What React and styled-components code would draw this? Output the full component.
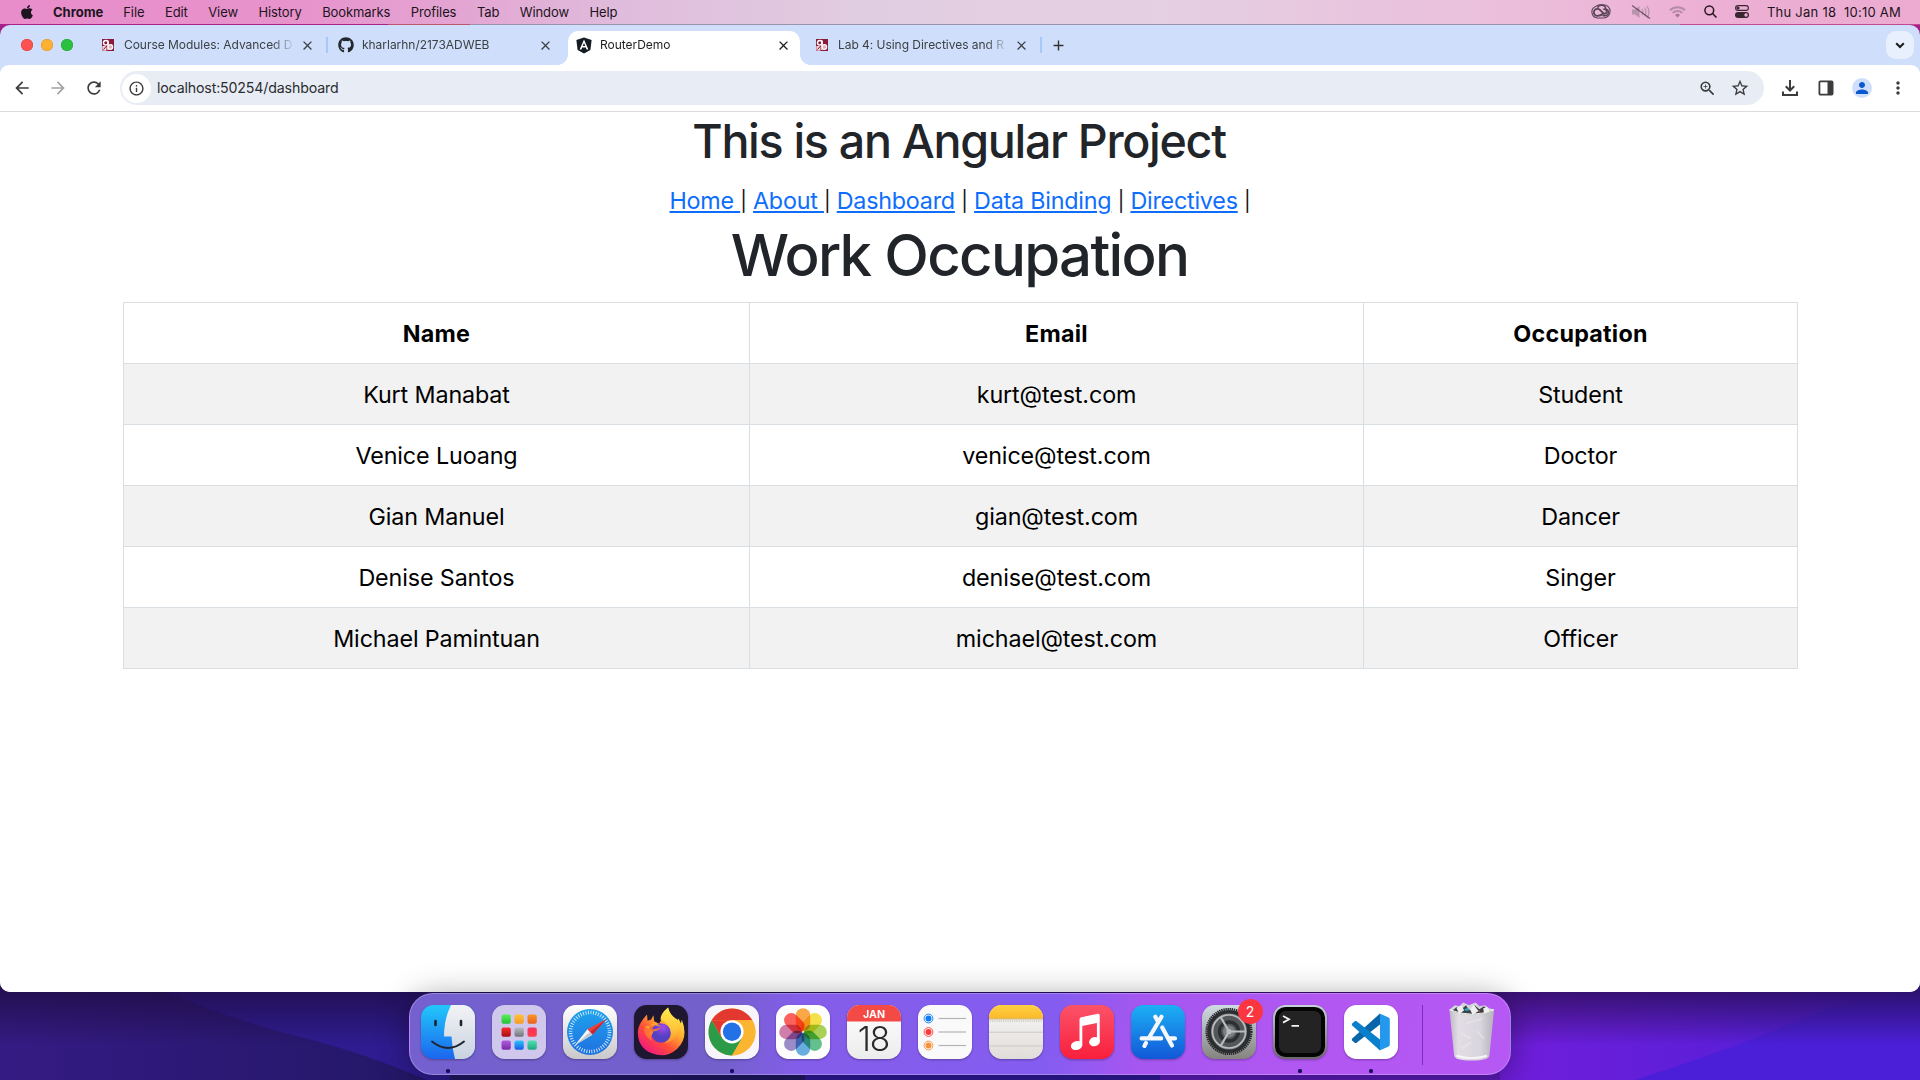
import React from "react";
import styled, { createGlobalStyle, css } from "styled-components";
import { FaApple, FaGithub } from "react-icons/fa";
import {
  MdArrowBack,
  MdArrowForward,
  MdRefresh,
  MdInfoOutline,
  MdZoomIn,
  MdStarBorder,
  MdMoreVert,
  MdPerson,
  MdClose,
  MdAdd,
} from "react-icons/md";

const GlobalStyle = createGlobalStyle`
  *, *::before, *::after { box-sizing: border-box; }
  body { margin: 0; font-family: Inter, Roboto, sans-serif; overflow: hidden; }
`;

const Desktop = styled.div`
  position: relative;
  display: flex;
  flex-direction: column;
  width: 1920px;
  height: 1080px;
  overflow: hidden;
  background: #a3208b;
`;

const Wallpaper = styled.svg`
  position: absolute;
  inset: 0;
`;

const MenuBar = styled.header`
  position: relative;
  display: flex;
  align-items: center;
  justify-content: space-between;
  height: 25px;
  padding: 0 19px 2px 19px;
  font-size: 13px;
  color: #1d1420;
  background:
    linear-gradient(90deg, #a8238a 0 388px, #c0546e 388px 470px, #9a93ae 470px 1680px, #c34a8d 1680px) 0 100% / 100% 1px no-repeat,
    linear-gradient(90deg, #e88dca 0, #e793cc 300px, #e3a6d3 470px, #e0bcdc 620px, #e1cde1 860px, #e4cfe2 1150px, #ebbfdc 1500px, #edb0d5 1700px, #ecaad0 1920px);
`;

const Menus = styled.nav`
  display: flex;
  align-items: center;
  gap: 20.5px;
  letter-spacing: -0.1px;
`;

const Status = styled.div`
  display: flex;
  align-items: center;
  gap: 18px;
`;

const Clock = styled.span`
  white-space: pre;
  letter-spacing: 0.24px;
`;

const AppName = styled.span`
  margin: 0 -0.500px 0 -2.500px;
  font-weight: 700;
  letter-spacing: 0;
`;

const BrowserWindow = styled.main`
  position: relative;
  display: flex;
  flex-direction: column;
  height: 967px;
  overflow: hidden;
  border-radius: 10px;
  background: #cfdffb;
`;

const TabStrip = styled.div`
  display: flex;
  align-items: center;
  height: 40px;
  padding: 0 6px 0 21px;
`;

const Lights = styled.div`
  display: flex;
  gap: 8px;
  width: 69px;
`;

const Light = styled.span`
  width: 12px;
  height: 12px;
  border-radius: 50%;
  background: ${(p) => p.$color};
  box-shadow: inset 0 0 0 0.5px ${(p) => p.$edge};
`;

const TabSlot = styled.div`
  display: flex;
  align-items: flex-end;
  width: 238px;
  height: 40px;
  padding: 0 4px 0 2px;
  background: ${(p) => (p.$divider ? "linear-gradient(#a5c8f8, #a5c8f8) 100% 50% / 2px 16px no-repeat" : "none")};
`;

const TabBody = styled.div`
  position: relative;
  display: flex;
  align-items: center;
  width: 232px;
  height: 34px;
  padding: 0 9px 6px 8px;
  border-radius: 10px 10px 0 0;
  font-size: 12px;
  color: #3c4043;
  ${(p) =>
    p.$active &&
    css`
      color: #1f1f1f;
      background: #fff;
      &::before,
      &::after {
        content: "";
        position: absolute;
        bottom: 0;
        width: 10px;
        height: 10px;
      }
      &::before {
        left: -10px;
        background: radial-gradient(circle at 0 0, transparent 9.5px, #fff 10px);
      }
      &::after {
        right: -10px;
        background: radial-gradient(circle at 100% 0, transparent 9.5px, #fff 10px);
      }
    `}
`;

const TabIcon = styled.span`
  display: flex;
  justify-content: center;
  width: 16px;
  margin-right: 8px;
`;

const TabTitle = styled.span`
  width: 172px;
  margin-right: 5px;
  padding-bottom: 1px;
  white-space: nowrap;
  letter-spacing: -0.03px;
  mask-image: linear-gradient(90deg, #000 148px, transparent 171px);
`;

const TabClose = styled(MdClose)`
  flex: none;
  width: 15px;
  height: 15px;
`;

const NewTab = styled(MdAdd)`
  width: 17px;
  height: 17px;
  margin-left: 8px;
  color: #333;
`;

const TabSearch = styled.button`
  display: flex;
  align-items: center;
  justify-content: center;
  width: 28px;
  height: 28px;
  margin-left: auto;
  padding: 0;
  border: 0;
  border-radius: 10px;
  background: #e8f0fd;
`;

const Toolbar = styled.div`
  display: flex;
  align-items: center;
  height: 47px;
  padding: 0 4px 0 12px;
  border-bottom: 1px solid #dcdcdf;
  border-radius: 9px 9px 0 0;
  background: #fff;
  color: #3c3c3e;
`;

const NavButtons = styled.div`
  display: flex;
  gap: 16px;
  width: 108px;
`;

const Omnibox = styled.div`
  display: flex;
  align-items: center;
  width: 1644px;
  height: 34px;
  padding: 0 14px 0 2px;
  border-radius: 17px;
  background: #e8ecf5;
`;

const SiteInfo = styled.span`
  display: flex;
  align-items: center;
  justify-content: center;
  width: 29px;
  height: 29px;
  margin-right: 6px;
  border-radius: 50%;
  background: #fff;
`;

const Address = styled.span`
  padding-bottom: 1px;
  color: #2b2d30;
  font-size: 14.2px;
  letter-spacing: -0.16px;
`;

const OmniActions = styled.span`
  display: flex;
  align-items: center;
  gap: 13px;
  margin-left: auto;
`;

const ToolActions = styled.div`
  display: grid;
  grid-template-columns: repeat(4, 36px);
  place-items: center;
  margin-left: auto;
`;

const Avatar = styled.span`
  display: flex;
  align-items: center;
  justify-content: center;
  width: 20px;
  height: 20px;
  border-radius: 50%;
  background: #cfdffb;
  color: #0b57d0;
`;

const Page = styled.section`
  flex: 1;
  background: #fff;
  color: #212529;
  font-size: 23.3px;
  line-height: 36px;
  letter-spacing: -0.12px;
  text-align: center;
`;

const ProjectTitle = styled.h2`
  margin: 0;
  padding: 1px 2px 11px 0;
  font-size: 46.6px;
  line-height: 57.6px;
  font-weight: 550;
  letter-spacing: -1.31px;
`;

const Links = styled.nav`
  height: 36px;
  padding: 1px 0 0;
  white-space: pre;
  letter-spacing: -0.22px;
`;

const Link = styled.a`
  color: #0d6efd;
  text-decoration: underline 2px;
  text-underline-offset: 2px;
`;

const Separator = styled.span`
  font-size: 20px;
  vertical-align: 1px;
  line-height: 1;
  color: #111;
`;

const PageTitle = styled.h1`
  margin: 0;
  padding: 1px 1px 11px 0;
  font-size: 58.2px;
  line-height: 72px;
  font-weight: 550;
  letter-spacing: -1.7px;
`;

const Table = styled.table`
  width: 1674px;
  margin: 0 auto;
  border-collapse: collapse;
  table-layout: fixed;
  color: #000;
`;

const Cell = styled.td`
  height: 61px;
  padding: 2px 0 0 1px;
  border: 1px solid #d9dee3;
  background: ${(p) => (p.$striped ? "#f2f2f2" : "#fff")};
`;

const HeadCell = styled(Cell)`
  width: ${(p) => p.$width}px;
  font-weight: 700;
  letter-spacing: 0.25px;
`;

const Dock = styled.footer`
  position: relative;
  display: flex;
  align-items: flex-start;
  width: 1102px;
  height: 82px;
  margin: 1px 0 0 409px;
  padding: 10.5px 14px 0 10.5px;
  border-radius: 24px;
  border: 1px solid rgba(255, 255, 255, 0.25);
  background:
    linear-gradient(100deg, transparent 640px, #a457f0 720px, #b257f2 900px, #b658f4 1102px),
    linear-gradient(90deg, #7461cf 0, #7360cb 310px, #845dea 390px, #855cf2 720px);
  box-shadow: 0 4px 30px 2px rgba(0, 0, 0, 0.34);
`;

const DockItem = styled.div`
  position: relative;
  display: flex;
  flex-direction: column;
  align-items: center;
  width: 54px;
  margin-right: 17px;
`;

const Tile = styled.svg`
  display: block;
  width: 54px;
  height: 54px;
  overflow: visible;
  filter: drop-shadow(0 1px 1px rgba(0, 0, 0, 0.3));
`;

const Running = styled.span`
  width: 4px;
  height: 4px;
  margin-top: 10.5px;
  border-radius: 1.5px;
  background: #1c0a5e;
`;

const Badge = styled.span`
  position: absolute;
  top: -6px;
  right: -7px;
  width: 25px;
  height: 25px;
  border-radius: 50%;
  background: #fb3640;
  color: #fff;
  font-size: 14px;
  line-height: 25px;
  text-align: center;
`;

const Divider = styled.span`
  width: 1px;
  height: 60px;
  margin: 0 26px 0 7px;
  background: #8029bd;
`;

const Trash = styled.svg`
  width: 50px;
  height: 62px;
  margin-top: -4px;
`;

const TileText = styled.text`
  font-family: Inter, sans-serif;
  text-anchor: middle;
`;

const CourseIcon = () => (
  <svg width="12" height="12" viewBox="0 0 12 12">
    <rect width="12" height="12" fill="#8a1a3a" />
    <rect x="0.300" y="7" width="4.200" height="4.700" fill="#f0d3da" />
    <circle cx="3.800" cy="3.800" r="2.300" fill="none" stroke="#fff" strokeWidth="1.500" />
    <path d="M1.500 10.500L5 6.500" stroke="#8a1a3a" strokeWidth="1" />
    <path d="M6 1.500v9.500" stroke="#fff" strokeWidth="1.400" />
    <circle cx="8.400" cy="8" r="2.300" fill="#e3aebb" stroke="#fff" strokeWidth="1.200" />
  </svg>
);

const AngularIcon = () => (
  <svg width="16" height="17" viewBox="0 0 16 17">
    <path d="M8 .4L15.6 3l-1.2 10L8 16.6 1.6 13 .4 3z" fill="#151b22" />
    <path d="M8 2.6L3.600 12.600h1.800l.8-2.100h3.600l.8 2.100h1.800zM8 6l1.200 3H6.800z" fill="#fff" fillRule="evenodd" />
  </svg>
);

const TABS = [
  { title: "Course Modules: Advanced D", icon: <CourseIcon />, divider: true },
  { title: "kharlarhn/2173ADWEB", icon: <FaGithub size={16} color="#24292f" /> },
  { title: "RouterDemo", icon: <AngularIcon />, active: true },
  { title: "Lab 4: Using Directives and R", icon: <CourseIcon />, divider: true },
];

const MENUS = ["File", "Edit", "View", "History", "Bookmarks", "Profiles", "Tab", "Window", "Help"];

const ROWS = [
  ["Kurt Manabat", "kurt@test.com", "Student"],
  ["Venice Luoang", "venice@test.com", "Doctor"],
  ["Gian Manuel", "gian@test.com", "Dancer"],
  ["Denise Santos", "denise@test.com", "Singer"],
  ["Michael Pamintuan", "michael@test.com", "Officer"],
];

const StatusIcons = () => (
  <>
    <svg width="22" height="15" viewBox="0 0 22 15" fill="none" stroke="#5a4556">
      <path d="M6.500 14A6 6 0 0 1 4.800 2.400 7 7 0 0 1 9 .8h3.500a6.600 6.600 0 0 1 0 13.200z" strokeWidth="1.100" />
      <path d="M12 9.800C9.500 12 7.500 11.800 6.200 11.800a3.500 3.500 0 1 1 2.600-6c1.200 1 2.200 2.200 3.200 3.200a2.200 2.200 0 1 0 .3-3.400" strokeWidth="1.800" />
      <path d="M6.500 3.800A4.400 4.400 0 0 1 14.900 5.300 3.300 3.300 0 0 1 14 11.800h-2.500" strokeWidth="1.500" />
    </svg>
    <svg width="20" height="16" viewBox="0 0 20 16">
      <path d="M1 5.500h3L8.500 2v12L4 10.500H1z" fill="#b793ac" />
      <path d="M11 5q2 3 0 6M13.500 3.500q3 4.500 0 9M16 2q4 6 0 12" fill="none" stroke="#b793ac" strokeWidth="1.300" />
      <path d="M1 1.500l18 13" stroke="#6b4f64" strokeWidth="1.100" />
    </svg>
    <svg width="17" height="12" viewBox="0 0 17 12" fill="none" stroke="#b58ba6" strokeWidth="1.900">
      <path d="M1 4.200a11 11 0 0 1 15 0M3.600 6.900a7.200 7.200 0 0 1 9.800 0" />
      <path d="M8.500 11.600L6 9a3.700 3.700 0 0 1 5 0z" fill="#a37796" stroke="none" />
    </svg>
    <svg width="13" height="13" viewBox="0 0 13 13" fill="none" stroke="#26161f" strokeWidth="1.500">
      <circle cx="5.300" cy="5.300" r="4.400" />
      <path d="M8.600 8.600l3.800 3.900" />
    </svg>
    <svg width="14" height="13" viewBox="0 0 14 13">
      <rect x=".6" y=".6" width="12.800" height="4.800" rx="2.400" fill="none" stroke="#3a2631" strokeWidth="1.100" />
      <circle cx="3" cy="3" r="1.600" fill="#3a2631" />
      <rect y="7" width="14" height="6" rx="3" fill="#3a2631" />
      <circle cx="11" cy="10" r="1.700" fill="#ecb0d3" />
    </svg>
  </>
);

const FinderArt = () => (
  <>
    <defs>
      <linearGradient id="fb" x1="0" y1="0" x2="0" y2="1"><stop stopColor="#22c7fb" /><stop offset="1" stopColor="#1b66ee" /></linearGradient>
      <linearGradient id="fw" x1="0" y1="0" x2="0" y2="1"><stop stopColor="#f3f3f6" /><stop offset="1" stopColor="#c8d3e0" /></linearGradient>
      <clipPath id="tile"><rect width="54" height="54" rx="12.500" /></clipPath>
    </defs>
    <g clipPath="url(#tile)">
      <rect width="54" height="54" fill="url(#fb)" />
      <path d="M30 0Q23 14 23 31.500h7.500Q31 43 34 54h20V0z" fill="url(#fw)" />
    </g>
    <path d="M14.500 16v4M40 16v4" stroke="#1d2430" strokeWidth="2.600" strokeLinecap="round" />
    <path d="M11 36.500q16 13 32 0" fill="none" stroke="#20252d" strokeWidth="1.900" strokeLinecap="round" />
  </>
);

const PADS = [
  ["#5cf05a", "#22c136"], ["#ffc23c", "#f89a1c"], ["#fb9626", "#e8621c"],
  ["#fb2b2e", "#a50d12"], ["#b9bcc0", "#6f7276"], ["#fc2f5e", "#fb4049"],
  ["#b05be0", "#7a2aa8"], ["#2fc4fb", "#145be8"], ["#51dfb0", "#1fa882"],
];

const LaunchpadArt = () => (
  <>
    <rect width="54" height="54" rx="12.500" fill="#cfc8ec" />
    {PADS.map(([a, b], i) => (
      <g key={i}>
        <linearGradient id={`pad${i}`} x1="0" y1="0" x2="0" y2="1"><stop stopColor={a} /><stop offset="1" stopColor={b} /></linearGradient>
        <rect x={9.5 + (i % 3) * 13} y={9.5 + Math.floor(i / 3) * 13} width="9.300" height="9.300" rx="2" fill={`url(#pad${i})`} />
      </g>
    ))}
  </>
);

const SafariArt = () => (
  <>
    <linearGradient id="sfb" x1="0" y1="0" x2="0" y2="1"><stop stopColor="#fff" /><stop offset="1" stopColor="#c9c9cb" /></linearGradient>
    <linearGradient id="sfc" x1="0" y1="0" x2="0" y2="1"><stop stopColor="#1fa4ee" /><stop offset="1" stopColor="#1f6fe0" /></linearGradient>
    <rect width="54" height="54" rx="12.500" fill="url(#sfb)" />
    <circle cx="27" cy="27" r="23" fill="url(#sfc)" />
    <circle cx="27" cy="27" r="19.500" fill="none" stroke="#d9edfb" strokeWidth="3.600" strokeDasharray="0.900 1.652" />
    <path d="M43.500 14L24.400 24.300l5 5.400z" fill="#f0403c" />
    <path d="M43.500 14L27 27l2.400 2.700z" fill="#c82a2c" />
    <path d="M12 40l12.400-15.700 5 5.400z" fill="#f4f6f8" />
    <path d="M12 40L27 27l2.400 2.700z" fill="#c3c8ce" />
  </>
);

const FirefoxArt = () => (
  <>
    <defs>
      <linearGradient id="ff" x1="0.900" y1="0.100" x2="0.200" y2="1"><stop stopColor="#fff04f" /><stop offset=".35" stopColor="#ffab2d" /><stop offset=".65" stopColor="#ff4a3a" /><stop offset="1" stopColor="#f0128a" /></linearGradient>
      <linearGradient id="ffy" x1="0.500" y1="0" x2="0.500" y2="1"><stop stopColor="#ffee4c" /><stop offset=".6" stopColor="#ffc43a" /><stop offset="1" stopColor="#ff8a2e" /></linearGradient>
      <radialGradient id="ffg" cx=".6" cy=".2"><stop stopColor="#a34be8" /><stop offset="1" stopColor="#5540c4" /></radialGradient>
    </defs>
    <rect width="54" height="54" rx="12.500" fill="#1f1630" />
    <path d="M13 9.500l.6 6.300 3.600-1.200 2.200-4.400.8 6 5 2.600L34 2.500q2 7 7 11l1.500 4 2-4 2.500 5 .8-4Q55 33 43 44 34 52 23 49.800 4 46 3.800 27 4 19 13 9.500z" fill="url(#ff)" />
    <path d="M34 2.500q-7.500 6-7.500 12 8 2.500 9.500 11 1 8-6 13 11-2 14-11 2.200-8-.5-13Q35 10 34 2.500z" fill="url(#ffy)" />
    <circle cx="27" cy="28" r="9.800" fill="url(#ffg)" />
    <path d="M27 21.500l-6-1.200-10 .9q3 5 8.500 5.300-2 3-2.800 6Q12 22 20 17z" fill="#ffa02f" />
    <path d="M10 22q8 4 17 .5-3 4-8.500 4Q16 32 18 36 9 30 10 22z" fill="#ff7a35" opacity=".85" />
  </>
);

const ChromeArt = () => (
  <>
    <rect width="54" height="54" rx="12.500" fill="#f7f5fb" />
    <circle cx="27" cy="27" r="23.500" fill="#fbb531" />
    <path d="M6.650 15.250A23.500 23.500 0 0 1 47.350 15.250H27z" fill="#e2382f" />
    <path d="M6.650 15.250L16.800 32.900 27 27V15.250z" fill="#e2382f" />
    <path d="M6.650 15.250A23.500 23.500 0 0 0 27 50.500L37.200 32.900 27 27 16.800 32.900z" fill="#2c9b48" />
    <path d="M27 50.500A23.500 23.500 0 0 0 47.350 15.250H27L37.200 32.900z" fill="#fbb531" />
    <circle cx="27" cy="26.800" r="11.600" fill="#fff" />
    <circle cx="27" cy="26.800" r="9.200" fill="#2271e6" />
  </>
);

const PETALS = ["#fb9a2c", "#f5dd2a", "#9ccb3c", "#4bb87a", "#4fa3dc", "#8a7cc0", "#cc6aa2", "#fb4a44"];

const Petal = styled.rect`
  mix-blend-mode: multiply;
`;

const PhotosArt = () => (
  <>
    <rect width="54" height="54" rx="12.500" fill="#fdfdfd" />
    {PETALS.map((c, i) => (
      <Petal key={c} x="19.800" y="3.200" width="14.400" height="23" rx="7.200" fill={c} fillOpacity=".86" transform={`rotate(${i * 45} 27 27)`} />
    ))}
  </>
);

const CalendarArt = () => (
  <>
    <linearGradient id="cal" x1="0" y1="0" x2="0" y2="1"><stop stopColor="#fff" /><stop offset="1" stopColor="#ececec" /></linearGradient>
    <rect width="54" height="54" rx="12.500" fill="url(#cal)" />
    <path d="M0 16.500v-4A12.500 12.500 0 0 1 12.500 0h29A12.500 12.500 0 0 1 54 12.500v4z" fill="#f44a46" />
    <TileText x="27" y="13" fontSize="10.600" fontWeight="700" fill="#fff">JAN</TileText>
    <TileText x="26.500" y="45.500" fontSize="33.500" fontWeight="300" fill="#2a2a2a" letterSpacing="-1.200">18</TileText>
  </>
);

const RemindersArt = () => (
  <>
    <rect width="54" height="54" rx="12.500" fill="#fafafa" />
    {["#0f7bf5", "#fb3a3a", "#f5923a"].map((c, i) => (
      <g key={c} transform={`translate(0 ${13.5 + i * 13.5})`}>
        <circle cx="10.500" r="4.400" fill="none" stroke={c} strokeWidth=".9" />
        <circle cx="10.500" r="3" fill={c} />
        <path d="M20.500 0H48" stroke="#b4b4b6" strokeWidth="1.200" />
      </g>
    ))}
  </>
);

const NotesArt = () => (
  <>
    <linearGradient id="nt" x1="0" y1="0" x2="0" y2="1"><stop stopColor="#ffd043" /><stop offset="1" stopColor="#fbb92b" /></linearGradient>
    <linearGradient id="np" x1="0" y1="0" x2="0" y2="1"><stop stopColor="#f8f7f6" /><stop offset="1" stopColor="#e0dcd9" /></linearGradient>
    <rect width="54" height="54" rx="12.500" fill="url(#np)" />
    <path d="M0 13.500v-1A12.500 12.500 0 0 1 12.500 0h29A12.500 12.500 0 0 1 54 12.500v1z" fill="url(#nt)" />
    <path d="M0 13.900h54" stroke="#c99a3a" strokeWidth=".8" />
    <path d="M1 16h52" stroke="#a8a6a4" strokeWidth="1" strokeDasharray="1 1.200" />
    <path d="M0 27.200h54M0 41h54" stroke="#cbc8c6" strokeWidth="1" />
  </>
);

const MusicArt = () => (
  <>
    <linearGradient id="mu" x1="0" y1="0" x2="0" y2="1"><stop stopColor="#fb5368" /><stop offset="1" stopColor="#f91f3c" /></linearGradient>
    <rect width="54" height="54" rx="12.500" fill="url(#mu)" />
    <path d="M19.500 14.500q0-1.800 1.800-2.200l16.500-3.500q1.900-.3 1.900 1.500v26h-2.800V18L22.300 21v19h-2.800z" fill="#fff" />
    <ellipse cx="16.600" cy="40.500" rx="5.800" ry="4.500" fill="#fff" transform="rotate(-15 16.600 40.500)" />
    <ellipse cx="34.500" cy="36.700" rx="5.500" ry="4.500" fill="#fff" transform="rotate(-15 34.500 36.700)" />
  </>
);

const AppStoreArt = () => (
  <>
    <linearGradient id="as" x1="0" y1="0" x2="0" y2="1"><stop stopColor="#1cb0f4" /><stop offset="1" stopColor="#1257d8" /></linearGradient>
    <rect width="54" height="54" rx="12.500" fill="url(#as)" />
    <g stroke="#f4f8fd" strokeWidth="4.200" strokeLinecap="round">
      <path d="M30.500 11.800L18.200 32.500M15 38l-1.600 2.900M24.300 11.800l2.200 3.800M31.200 22.500L41 40.500M10.600 33.400h19.600M38.500 33.400H44" />
    </g>
  </>
);

const SettingsArt = () => (
  <>
    <linearGradient id="st" x1="0" y1="0" x2="0" y2="1"><stop stopColor="#cfdbe2" /><stop offset="1" stopColor="#85837f" /></linearGradient>
    <rect width="54" height="54" rx="12.500" fill="url(#st)" />
    <circle cx="27" cy="26.500" r="22.300" fill="none" stroke="#26282b" strokeWidth="2.600" strokeDasharray="1.400 .7" />
    <circle cx="27" cy="26.500" r="19.800" fill="#7b7d80" stroke="#2b2d30" strokeWidth="3.600" />
    <circle cx="27" cy="26.500" r="16.500" fill="#55585b" stroke="#b9bdc0" strokeWidth="1.600" />
    <circle cx="27" cy="26.500" r="9.500" fill="none" stroke="#2d2f31" strokeWidth="3.400" />
    <circle cx="27" cy="26.500" r="6" fill="#7c7e80" />
    <path d="M27 26.500h17M27 26.500l-8.500-14.700M27 26.500l-8.500 14.700" stroke="#b9bdc0" strokeWidth="2.200" />
    <circle cx="27" cy="26.500" r="2.600" fill="#b9bdc0" />
  </>
);

const TerminalArt = () => (
  <>
    <linearGradient id="te" x1="0" y1="0" x2="0" y2="1"><stop stopColor="#c6d3d8" /><stop offset="1" stopColor="#6c6a68" /></linearGradient>
    <rect width="54" height="54" rx="12.500" fill="url(#te)" />
    <rect x="2" y="2" width="50" height="50" rx="10.500" fill="#050505" />
    <rect x="6" y="6" width="42" height="42" rx="6.500" fill="#232323" />
    <path d="M10 11l6 3.300-6 3.300M18.500 20.800h7.500" fill="none" stroke="#f3f3f3" strokeWidth="1.800" />
  </>
);

const CodeArt = () => (
  <>
    <rect width="54" height="54" rx="12.500" fill="#fff" />
    <path d="M36 8.500L8.200 33.500q-.8 1 0 2l2.400 2.200q1 .6 2 0L36 19.500z" fill="#0a66ab" />
    <path d="M36 45.500L8.200 20.500q-.8-1 0-2l2.400-2.200q1-.6 2 0L36 34.500z" fill="#0a7fcb" />
    <path d="M35 8.300l9.600 4.200q1.200.7 1.200 2v25q0 1.300-1.200 2L35 45.700q1 0 1-2V10.300q0-2-1-2z" fill="#2498ec" />
  </>
);

const TrashArt = () => (
  <>
    <defs>
      <linearGradient id="tr" x1="0" y1="0" x2="1" y2="0"><stop stopColor="#bdbcc0" /><stop offset=".2" stopColor="#e4e3e5" /><stop offset=".7" stopColor="#dadadb" /><stop offset="1" stopColor="#b5b3b8" /></linearGradient>
    </defs>
    <path d="M2 7l5-4 5 1 4-4 6 3 7-3 4 4 6-1 4 3 5 1-2 6H5z" fill="#d3d6d9" />
    <path d="M5 8l4-3 4 3 6-5 3 5 6-5 5 4 5-3 3 4 5 1-5 5H9z" fill="#3c3f45" />
    <path d="M17 7l4-1.500 1.500 2.500-4 1z" fill="#2aa7b8" />
    <path d="M31 8l3 .5-1.500 2z" fill="#a8562f" />
    <path d="M9 6l5-3 3 5-5 4zM23 7l4-5 5 7-6 4zM37 6l5-1 2 5-6 2z" fill="#eceef0" />
    <path d="M1.500 7.500Q25 17 48.500 7.500L43.500 56q-.6 5-18.500 5T6.500 56z" fill="url(#tr)" opacity=".96" />
    <path d="M1.500 7.500Q25 17 48.500 7.500" fill="none" stroke="#f5f5f6" strokeWidth="1" />
    <path d="M9 56q16 5 32 0" fill="none" stroke="#f7f7f7" strokeWidth="2" />
    <path d="M20 22l16-5M14 32l10 6M30 30l8 8M15 48l9-6" stroke="#f3f3f4" strokeWidth="2" opacity=".35" />
  </>
);

const APPS = [
  { id: "finder", art: <FinderArt />, running: true },
  { id: "launchpad", art: <LaunchpadArt /> },
  { id: "safari", art: <SafariArt /> },
  { id: "firefox", art: <FirefoxArt /> },
  { id: "chrome", art: <ChromeArt />, running: true },
  { id: "photos", art: <PhotosArt /> },
  { id: "calendar", art: <CalendarArt /> },
  { id: "reminders", art: <RemindersArt /> },
  { id: "notes", art: <NotesArt /> },
  { id: "music", art: <MusicArt /> },
  { id: "appstore", art: <AppStoreArt /> },
  { id: "settings", art: <SettingsArt />, badge: 2 },
  { id: "terminal", art: <TerminalArt />, running: true },
  { id: "code", art: <CodeArt />, running: true },
];

export default function App() {
  return (
    <Desktop>
      <GlobalStyle />
      <Wallpaper width="1920" height="1080" viewBox="0 0 1920 1080">
        <defs>
          <linearGradient id="wl" x1="0" x2="1"><stop stopColor="#341b84" /><stop offset="1" stopColor="#221765" /></linearGradient>
          <linearGradient id="wr" x1="0" x2="1"><stop stopColor="#701edb" /><stop offset="1" stopColor="#4b1fd6" /></linearGradient>
          <linearGradient id="ws" x1="0" y1="0" x2="0" y2="1"><stop stopColor="#1c0a38" stopOpacity=".72" /><stop offset="1" stopColor="#1c0a38" stopOpacity="0" /></linearGradient>
        </defs>
        <rect y="500" width="450" height="580" fill="url(#wl)" />
        <path d="M150 985Q230 1020 300 1037T450 1090V985z" fill="#2e1c90" />
        <rect x="450" y="985" width="360" height="95" fill="#201867" />
        <rect x="805" y="985" width="360" height="95" fill="#2f1a9c" />
        <rect x="1160" y="985" width="350" height="95" fill="#5c1bbb" />
        <rect x="1500" y="500" width="420" height="580" fill="url(#wr)" />
        <path d="M1635 1080Q1730 1050 1800 1020T1920 998V1080z" fill="#4b1fd8" />
        <rect y="985" width="1920" height="60" fill="url(#ws)" />
      </Wallpaper>

      <MenuBar>
        <Menus>
          <FaApple size={16} />
          <AppName>Chrome</AppName>
          {MENUS.map((menu) => (
            <span key={menu}>{menu}</span>
          ))}
        </Menus>
        <Status>
          <StatusIcons />
          <Clock>{"Thu Jan 18  10:10 AM"}</Clock>
        </Status>
      </MenuBar>

      <BrowserWindow>
        <TabStrip>
          <Lights>
            <Light $color="#fc5350" $edge="#dc3b38" />
            <Light $color="#fdb133" $edge="#dd9422" />
            <Light $color="#2bc03f" $edge="#1fa12f" />
          </Lights>
          {TABS.map((tab) => (
            <TabSlot key={tab.title} $divider={tab.divider}>
              <TabBody $active={tab.active}>
                <TabIcon>{tab.icon}</TabIcon>
                <TabTitle>{tab.title}</TabTitle>
                <TabClose />
              </TabBody>
            </TabSlot>
          ))}
          <NewTab />
          <TabSearch>
            <svg width="10" height="7" viewBox="0 0 10 7" fill="none" stroke="#1b1b1b" strokeWidth="2">
              <path d="M1.200 1.200L5 5l3.800-3.800" />
            </svg>
          </TabSearch>
        </TabStrip>

        <Toolbar>
          <NavButtons>
            <MdArrowBack size={20} color="#3c3c3e" />
            <MdArrowForward size={20} color="#a3a3a5" />
            <MdRefresh size={20} color="#3c3c3e" />
          </NavButtons>
          <Omnibox>
            <SiteInfo>
              <MdInfoOutline size={17} />
            </SiteInfo>
            <Address>localhost:50254/dashboard</Address>
            <OmniActions>
              <MdZoomIn size={19} />
              <MdStarBorder size={20} />
            </OmniActions>
          </Omnibox>
          <ToolActions>
            <svg width="18" height="18" viewBox="0 0 18 18" fill="none" stroke="#3c3c3e" strokeWidth="2">
              <path d="M9 1v10M4.800 7.300L9 11.500l4.200-4.200M2 12.500V16h14v-3.500" />
            </svg>
            <svg width="16" height="16" viewBox="0 0 16 16" fill="none" stroke="#3c3c3e" strokeWidth="1.800">
              <rect x="1.400" y="1.400" width="13.200" height="13.200" rx="1" />
              <path d="M9.500 1h5v14h-5z" fill="#3c3c3e" stroke="none" />
            </svg>
            <Avatar>
              <MdPerson size={18} />
            </Avatar>
            <MdMoreVert size={20} />
          </ToolActions>
        </Toolbar>

        <Page>
          <ProjectTitle>This is an Angular Project</ProjectTitle>
          <Links>
            <Link>{"Home "}</Link>
            <Separator>|</Separator>{" "}
            <Link>{"About "}</Link>
            <Separator>|</Separator>{" "}
            <Link>Dashboard</Link>{" "}
            <Separator>|</Separator>{" "}
            <Link>Data Binding</Link>{" "}
            <Separator>|</Separator>{" "}
            <Link>Directives</Link>{" "}
            <Separator>|</Separator>
          </Links>
          <PageTitle>Work Occupation</PageTitle>
          <Table>
            <thead>
              <tr>
                <HeadCell as="th" $width={626}>Name</HeadCell>
                <HeadCell as="th" $width={614}>Email</HeadCell>
                <HeadCell as="th" $width={434}>Occupation</HeadCell>
              </tr>
            </thead>
            <tbody>
              {ROWS.map((row, i) => (
                <tr key={row[0]}>
                  {row.map((value) => (
                    <Cell key={value} $striped={i % 2 === 0}>{value}</Cell>
                  ))}
                </tr>
              ))}
            </tbody>
          </Table>
        </Page>
      </BrowserWindow>

      <Dock>
        {APPS.map((app) => (
          <DockItem key={app.id}>
            <Tile viewBox="0 0 54 54">{app.art}</Tile>
            {app.badge && <Badge>{app.badge}</Badge>}
            {app.running && <Running />}
          </DockItem>
        ))}
        <Divider />
        <Trash viewBox="0 0 50 62">
          <TrashArt />
        </Trash>
      </Dock>
    </Desktop>
  );
}
